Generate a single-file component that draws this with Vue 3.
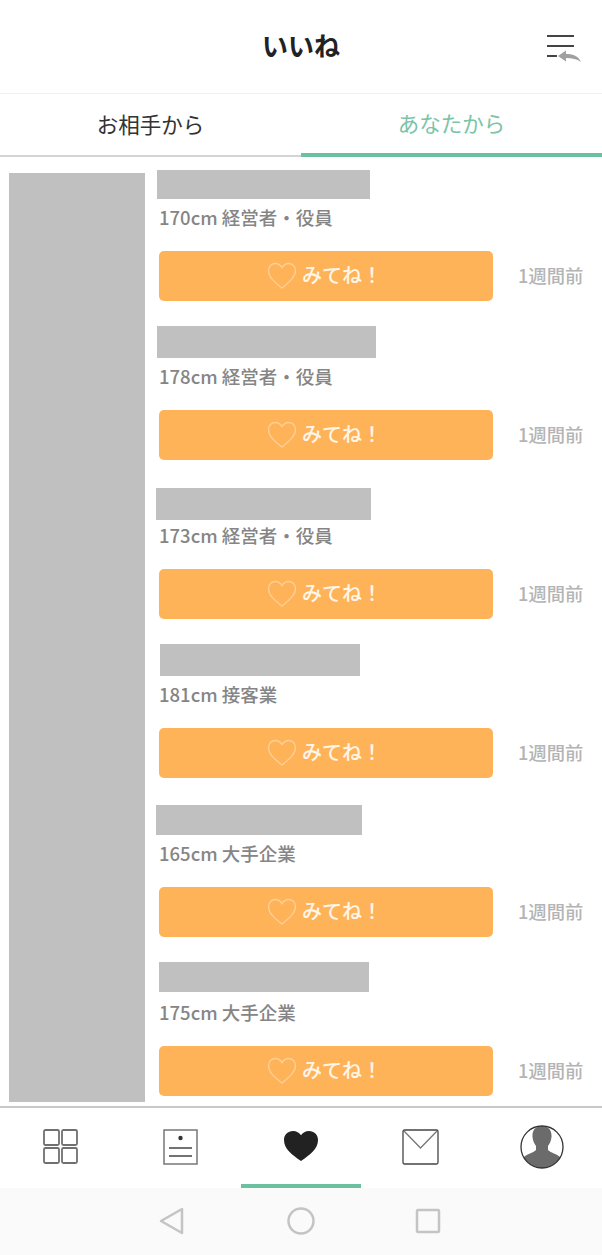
<script setup>
const items = [
  { profile: '170cm 経営者・役員', bar: { left: 12, top: 13, width: 213, height: 29 } },
  { profile: '178cm 経営者・役員', bar: { left: 12, top: 10, width: 219, height: 32 } },
  { profile: '173cm 経営者・役員', bar: { left: 11, top: 13, width: 215, height: 32 } },
  { profile: '181cm 接客業', bar: { left: 15, top: 10, width: 200, height: 32 } },
  { profile: '165cm 大手企業', bar: { left: 11, top: 12, width: 206, height: 30 } },
  { profile: '175cm 大手企業', bar: { left: 14, top: 10, width: 210, height: 30 } }
]

const barStyle = (bar) => ({
  left: bar.left + 'px',
  top: bar.top + 'px',
  width: bar.width + 'px',
  height: bar.height + 'px'
})
</script>

<template>
  <div class="page">
    <header class="header">
      <h1>いいね</h1>
      <svg class="sort-icon" width="38" height="34" viewBox="0 0 38 34">
        <path d="M1 5h27M1 15h27M1 25h10" stroke="#444" stroke-width="2" fill="none" />
        <path d="M12 25l8-5.500v3.500c6 0 12 1 15 8-4-3-9-4-15-4v3.500z" fill="#a0a0a0" />
      </svg>
    </header>

    <nav class="tabs">
      <div class="tab">お相手から</div>
      <div class="tab active">あなたから</div>
    </nav>

    <main class="content">
      <div class="photos"></div>
      <div class="list">
        <div v-for="(item, i) in items" :key="i" class="item">
          <div class="redacted" :style="barStyle(item.bar)"></div>
          <p class="profile">{{ item.profile }}</p>
          <div class="action">
            <button class="see-btn">
              <svg width="30" height="28" viewBox="0 0 30 28">
                <path d="M15 26C7 20 1.500 15 1.500 8.500 1.500 4.500 4.500 1.500 8.300 1.500c2.900 0 5.200 1.500 6.700 4.200 1.500-2.700 3.800-4.200 6.700-4.200 3.800 0 6.800 3 6.800 7 0 6.500-6.500 11.500-13.500 17.500z" fill="none" stroke="#ffcf96" stroke-width="1.300" />
              </svg>
              <span>みてね！</span>
            </button>
            <span class="time">1週間前</span>
          </div>
        </div>
      </div>
    </main>

    <nav class="bottom-nav">
      <div class="nav-item">
        <svg width="35" height="35" viewBox="0 0 35 35" fill="none" stroke="#707070" stroke-width="1.800">
          <rect x="1" y="1" width="15" height="15" rx="1.500" />
          <rect x="19" y="1" width="15" height="15" rx="1.500" />
          <rect x="1" y="19" width="15" height="15" rx="1.500" />
          <rect x="19" y="19" width="15" height="15" rx="1.500" />
        </svg>
      </div>
      <div class="nav-item">
        <svg width="36" height="36" viewBox="0 0 36 36" fill="none">
          <rect x="1" y="1" width="33" height="34" stroke="#777" stroke-width="1.500" />
          <circle cx="17.500" cy="9" r="2.200" fill="#333" />
          <path d="M6 19h23M6 27h23" stroke="#444" stroke-width="1.500" />
        </svg>
      </div>
      <div class="nav-item current">
        <svg width="36" height="32" viewBox="0 0 36 34" preserveAspectRatio="none">
          <path d="M18 33C9 26 1 20 1 10.500 1 5 5 1 10 1c3.500 0 6.300 1.700 8 4.500C19.700 2.700 22.500 1 26 1c5 0 9 4 9 9.500C35 20 27 26 18 33z" fill="#222" />
        </svg>
      </div>
      <div class="nav-item">
        <svg width="38" height="36" viewBox="0 0 38 36" fill="none" stroke="#444" stroke-width="1.300">
          <rect x="1" y="1" width="35" height="34" rx="1.500" />
          <path d="M2 2l16.500 17L35 2" stroke="#777" />
        </svg>
      </div>
      <div class="nav-item">
        <svg class="avatar" width="44" height="44" viewBox="0 0 44 44">
          <clipPath id="avatar-clip"><circle cx="22" cy="22" r="21" /></clipPath>
          <g clip-path="url(#avatar-clip)">
            <path d="M22 1c-7 0-10 5-9.500 11 .3 4 2 7 3.500 9v4c-3 3-9 4-12 7-2 2-3 6-3 12h42c0-6-1-10-3-12-3-3-9-4-12-7v-4c1.500-2 3.200-5 3.500-9C32 6 29 1 22 1z" fill="#6b6b6b" />
          </g>
          <circle cx="22" cy="22" r="21" fill="none" stroke="#333" stroke-width="1.300" />
        </svg>
      </div>
    </nav>

    <footer class="system-nav">
      <svg class="back" width="26" height="28" viewBox="0 0 26 28">
        <path d="M23 2v24L2 14z" fill="none" stroke="#c4c4c4" stroke-width="2.500" stroke-linejoin="round" />
      </svg>
      <svg width="28" height="28" viewBox="0 0 28 28">
        <circle cx="14" cy="14" r="12.500" fill="none" stroke="#c4c4c4" stroke-width="2.500" />
      </svg>
      <svg width="26" height="26" viewBox="0 0 26 26">
        <rect x="2" y="2" width="22" height="22" rx="1" fill="none" stroke="#c4c4c4" stroke-width="2.500" />
      </svg>
    </footer>
  </div>
</template>

<style scoped>
.page {
  width: 602px;
  height: 1255px;
  display: flex;
  flex-direction: column;
  background: #fff;
  font-family: "Noto Sans CJK JP", "Noto Sans", sans-serif;
  overflow: hidden;
}

.header {
  position: relative;
  height: 94px;
  flex: none;
  display: flex;
  align-items: center;
  justify-content: center;
  box-sizing: border-box;
  border-bottom: 1px solid #f0f0f0;
}

.header h1 {
  margin: 0 0 4px;
  font-size: 26px;
  font-weight: 700;
  color: #222;
}

.sort-icon {
  position: absolute;
  right: 18px;
  top: 31px;
}

.tabs {
  height: 63px;
  flex: none;
  display: flex;
  box-sizing: border-box;
}

.tab {
  flex: 1;
  display: flex;
  align-items: center;
  justify-content: center;
  padding-bottom: 3px;
  box-sizing: border-box;
  font-size: 21.500px;
  color: #333;
  border-bottom: 2px solid #d4d4d4;
}

.tab.active {
  color: #7cc4a8;
  border-bottom: 4px solid #6cbf9f;
}

.content {
  flex: 1;
  display: flex;
  min-height: 0;
}

.photos {
  flex: none;
  width: 136px;
  margin: 16px 0 4px 9px;
  background: #c0c0c0;
}

.list {
  flex: 1;
}

.item {
  position: relative;
  height: 159px;
  box-sizing: border-box;
  padding: 45px 0 0 14px;
}

.redacted {
  position: absolute;
  background: #c0c0c0;
}

.profile {
  margin: 0;
  height: 30px;
  line-height: 30px;
  font-size: 18.500px;
  font-weight: 500;
  color: #858585;
}

.action {
  display: flex;
  align-items: center;
  margin-top: 19px;
}

.see-btn {
  width: 334px;
  height: 50px;
  flex: none;
  display: flex;
  align-items: center;
  justify-content: center;
  gap: 5px;
  padding: 0 3px 3px 0;
  border: none;
  border-radius: 5px;
  background: #ffb359;
  color: #fff6ea;
  font-family: inherit;
  font-size: 20px;
  font-weight: 500;
}

.see-btn svg {
  margin-top: 3px;
}

.time {
  margin-left: 25px;
  padding-bottom: 3px;
  font-size: 18.300px;
  font-weight: 500;
  color: #b4b4b4;
  white-space: nowrap;
}

.bottom-nav {
  height: 82px;
  flex: none;
  display: flex;
  box-sizing: border-box;
  border-top: 2px solid #c8c8c8;
  background: #fff;
}

.nav-item {
  flex: 1;
  display: flex;
  align-items: center;
  justify-content: center;
  padding-bottom: 3px;
  box-sizing: border-box;
}

.nav-item.current {
  border-bottom: 4px solid #6cbf9f;
  padding-bottom: 0;
}

.avatar {
  margin-bottom: -1px;
}

.system-nav {
  height: 67px;
  flex: none;
  display: flex;
  align-items: center;
  justify-content: center;
  gap: 100px;
  padding: 0 0 1px 2px;
  box-sizing: border-box;
  background: #fafafa;
}

.back {
  margin-left: -4px;
  margin-right: 2px;
}
</style>

<style>
html, body {
  margin: 0;
  background: #fff;
}
</style>
